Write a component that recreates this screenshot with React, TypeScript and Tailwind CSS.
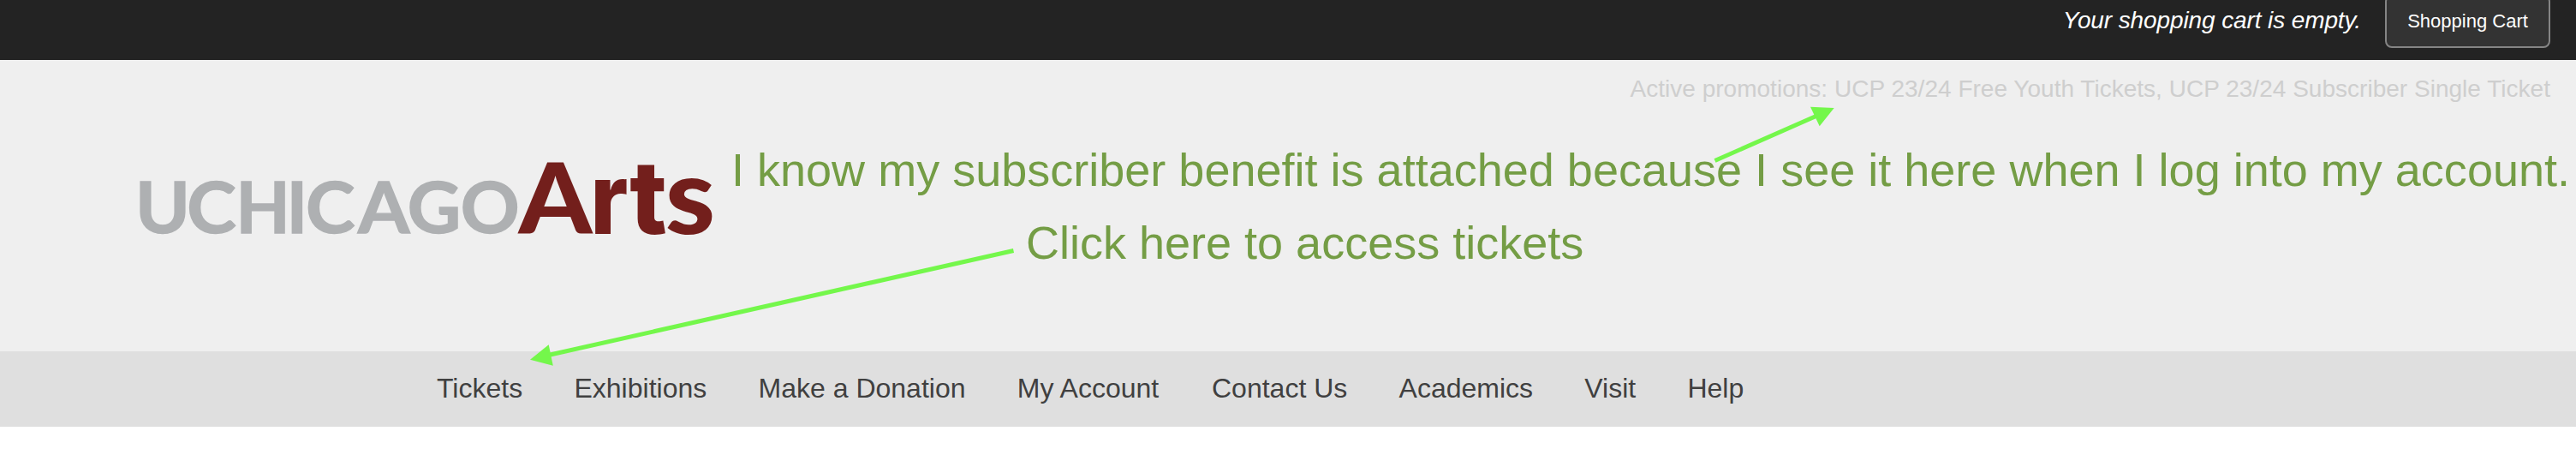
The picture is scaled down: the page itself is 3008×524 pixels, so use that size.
const NAV = ["Tickets", "Exhibitions", "Make a Donation", "My Account", "Contact Us", "Academics", "Visit", "Help"];

// Letter, x position, horizontal scale
const GRAY: [string, number, number][] = [
  ["U", 157.9, 1.05],
  ["C", 218.3, 1.06],
  ["H", 275.6, 1],
  ["I", 334.8, 1],
  ["C", 356.9, 1.06],
  ["A", 417.9, 1.06],
  ["G", 475.8, 1.05],
  ["O", 537.7, 1.04],
];

// Letter, x position, classes, horizontal and vertical scale
const RED: [string, number, string, number, number][] = [
  ["A", 605.4, "fill-[#731f1c] font-['Lato',sans-serif] text-[115px] font-black", 1.065, 1],
  ["r", 689.2, "fill-[#731f1c] font-['Inter',sans-serif] text-[114px] font-extrabold", 0.92, 1.02],
  ["t", 735.2, "fill-[#731f1c] font-['Inter',sans-serif] text-[114px] font-extrabold", 1, 1.05],
  ["s", 776.8, "fill-[#731f1c] font-['Lato',sans-serif] text-[115px] font-black", 1.15, 1.07],
];

function Logo() {
  return (
    <svg width="680" height="100" viewBox="160 180 680 100" className="block overflow-visible" role="img">
      {GRAY.map(([c, x, s]) => (
        <text
          key={x}
          transform={`translate(${x} 271.6) scale(${s} 1)`}
          className="fill-[#aeb0b2] stroke-[#aeb0b2] stroke-[1.4px] font-['Lato',sans-serif] text-[82px] font-bold"
        >
          {c}
        </text>
      ))}
      {RED.map(([c, x, k, sx, sy]) => (
        <text key={c} transform={`translate(${x} 272.5) scale(${sx} ${sy})`} className={k}>
          {c}
        </text>
      ))}
    </svg>
  );
}

export default function App() {
  return (
    <div className="relative h-[524px] w-[3008px] overflow-hidden bg-white font-['Liberation_Sans',sans-serif]">
      <div className="flex h-[70px] items-start justify-end bg-[#232323] pr-[30px] text-white">
        <span className="mt-[8px] mr-[28px] text-[28px] leading-[32px] tracking-[-0.11px] whitespace-nowrap italic">
          Your shopping cart is empty.
        </span>
        <button className="-mt-[6px] h-[62px] w-[193px] rounded-[8px] border-2 border-[#858585] bg-[#333] pb-[2px] text-[22px]">
          Shopping Cart
        </button>
      </div>
      <header className="flex h-[340px] flex-col bg-[#efefef]">
        <p className="mt-[18px] pr-[30px] text-right text-[28px] leading-[32px] tracking-[0.02px] whitespace-nowrap text-[#cecece]">
          Active promotions: UCP 23/24 Free Youth Tickets, UCP 23/24 Subscriber Single Ticket
        </p>
        <div className="mt-[60px] pl-[160px]">
          <Logo />
        </div>
      </header>
      <nav className="flex h-[88px] items-center gap-[60.2px] bg-[#dfdfdf] pb-[2px] pl-[510px] text-[32px] tracking-[0.01px] text-[#404040]">
        {NAV.map((n) => (
          <a key={n} className={n === "My Account" ? "pr-[1.5px] whitespace-nowrap" : "whitespace-nowrap"}>
            {n}
          </a>
        ))}
      </nav>
      <div className="absolute top-[167px] left-[854px] text-[54px] leading-[62px] tracking-[0.01px] whitespace-nowrap text-[#749d45]">
        I know my subscriber benefit is attached because I see it here when I log into my account.
      </div>
      <div className="absolute top-[252px] left-[1198px] text-[54px] leading-[62px] whitespace-nowrap text-[#749d45]">
        Click here to access tickets
      </div>
      <svg className="absolute top-0 left-0" width="3008" height="524" fill="#74f74b" stroke="#74f74b">
        <path d="M2002.5 187.5 2124 134M1183.5 292.5 638 415" strokeWidth="5" />
        <path stroke="none" d="M2141.7 126 2114 124.7 2124.7 147.3zM619 419.7 640.7 402.3 645.8 426.7z" />
      </svg>
    </div>
  );
}
